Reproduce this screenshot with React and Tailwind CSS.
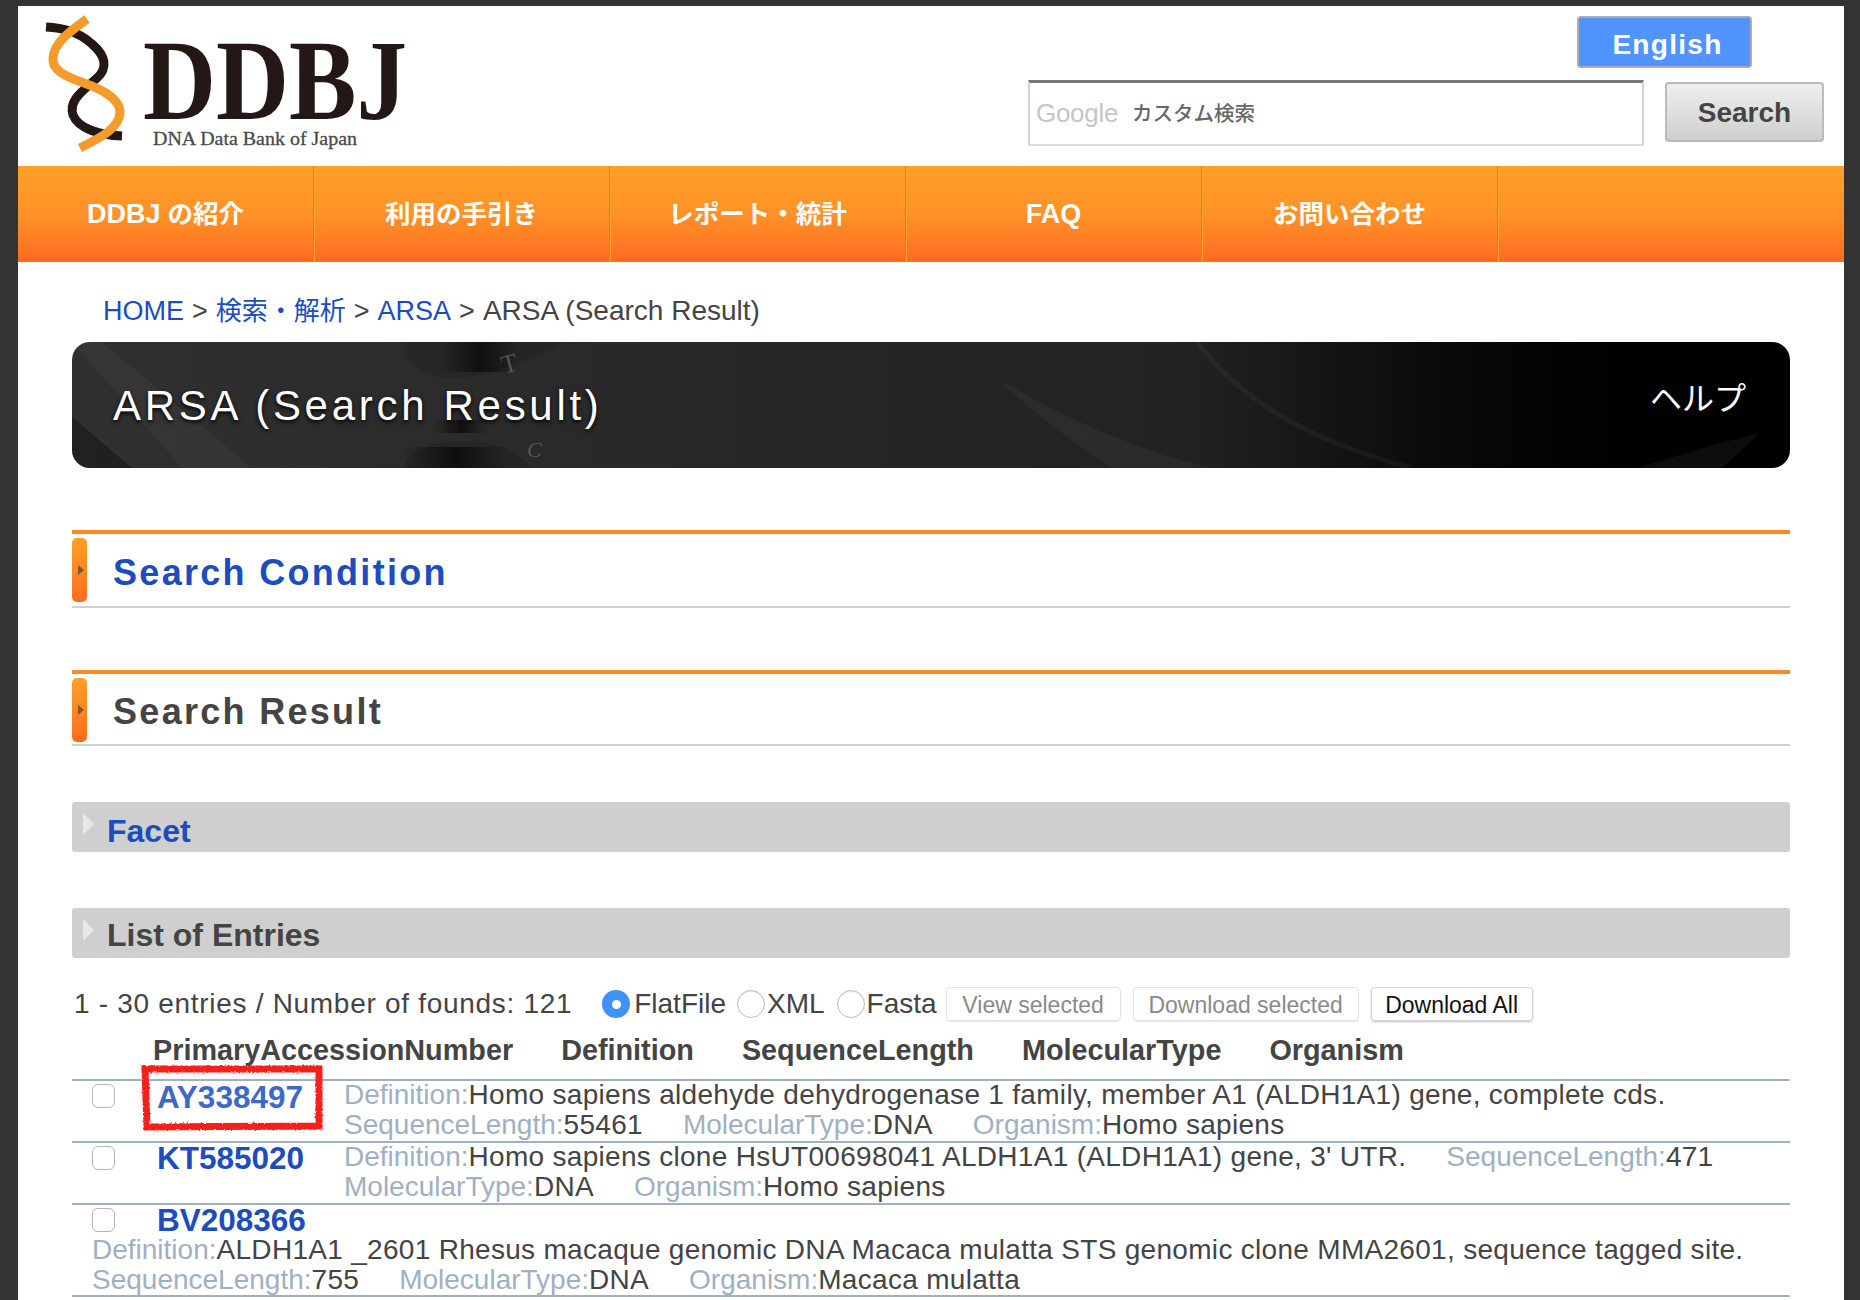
const navItems = [
  { latin: 'DDBJ', text: ' の紹介' },
  { text: '利用の手引き' },
  { text: 'レポート・統計' },
  { latin: 'FAQ' },
  { text: 'お問い合わせ' },
];

const Logo = () => (
  <svg width="400" height="160" viewBox="18 6 400 160" className="shrink-0">
    <path d="M46 27 C62 28 78 31 92 44 C106 56 108 68 97 78 C84 90 68 100 73 115 C78 128 98 135 122 136" fill="none" stroke="#231815" strokeWidth="9" />
    <path d="M87 19 C72 30 54 42 53 58 C52 70 64 76 84 83 C104 90 120 100 120 112 C120 128 100 138 80 148" fill="none" stroke="#f39c2c" strokeWidth="9" />
    <text x="143" y="119" textLength="264" lengthAdjust="spacingAndGlyphs" fontFamily="Liberation Serif" fontWeight="700" fontSize="114" fill="#231815">DDBJ</text>
    <text x="153" y="145" textLength="204" lengthAdjust="spacingAndGlyphs" fontFamily="Liberation Serif" fontSize="19" fill="#4a4a4a" stroke="#4a4a4a" strokeWidth="0.3">DNA Data Bank of Japan</text>
  </svg>
);

const BannerArt = () => (
  <svg className="absolute inset-0 h-full w-full" viewBox="0 0 1718 126" preserveAspectRatio="none">
    <defs>
      <linearGradient id="band" x1="0" x2="1" y1="0" y2="0">
        <stop offset="0" stopColor="#111" stopOpacity="0" />
        <stop offset="0.5" stopColor="#0c0c0c" stopOpacity="0.9" />
        <stop offset="1" stopColor="#111" stopOpacity="0" />
      </linearGradient>
    </defs>
    <path d="M0 0 L30 0 L180 126 L110 126 Z" fill="#fff" opacity="0.03" />
    <path d="M0 75 L60 126 L0 126 Z" fill="#000" opacity="0.3" />
    <path d="M332 0 C330 20 360 50 420 30 C450 20 480 10 490 0 Z" fill="#000" opacity="0.1" />
    <path d="M332 126 C335 105 380 90 430 105 C445 112 455 120 460 126 Z" fill="#000" opacity="0.12" />
    <rect x="368" y="0" width="80" height="30" fill="url(#band)" />
    <rect x="331" y="105" width="107" height="21" fill="url(#band)" />
    <rect x="361" y="78" width="57" height="13" fill="url(#band)" />
    <path d="M1125 0 C1170 60 1240 100 1340 126" fill="none" stroke="#fff" strokeWidth="5" opacity="0.04" />
    <path d="M928 38 C1000 80 1060 105 1138 126 L1040 126 C1000 100 960 70 928 38 Z" fill="#fff" opacity="0.04" />
    <path d="M1565 126 C1610 112 1650 100 1688 91 L1650 126 Z" fill="#fff" opacity="0.05" />
    <text x="432" y="32" fontFamily="Liberation Serif" fontSize="26" fill="#777" opacity="0.6" transform="rotate(-15 432 32)">T</text>
    <text x="455" y="115" fontFamily="Liberation Serif" fontStyle="italic" fontSize="22" fill="#777" opacity="0.6">C</text>
  </svg>
);

const SectionHead = ({ title, titleClass, after }) => (
  <div className={`border-t-4 border-b-2 border-t-[#fb8a24] border-b-[#d0d0d0] pt-1 ${after}`}>
    <div className="flex h-16 items-center">
      <div className="flex h-16 w-[15px] items-center rounded-[5px] bg-gradient-to-b from-[#ff9f28] to-[#fe6b20] pl-[6px]">
        <div className="h-0 w-0 border-y-[5px] border-l-[6px] border-y-transparent border-l-[#7a5a30]" />
      </div>
      <h2 className={`ml-[26px] text-[36px] font-bold tracking-[2.3px] ${titleClass}`}>{title}</h2>
    </div>
  </div>
);

const FoldBar = ({ title, color, after }) => (
  <div className={`flex h-[50px] items-center rounded-[3px] bg-[#cfcfcf] pl-[11px] ${after}`}>
    <div className="mb-[6px] h-0 w-0 border-y-[11px] border-l-[11px] border-y-transparent border-l-[#e8e8e8]" />
    <h3 className={`ml-[13px] text-[32px] font-bold ${color}`}>{title}</h3>
  </div>
);

const Radio = ({ checked }) =>
  checked ? (
    <span className="flex h-[28px] w-[28px] items-center justify-center rounded-full bg-[#3f93f7]">
      <span className="h-[9px] w-[9px] rounded-full bg-white" />
    </span>
  ) : (
    <span className="h-[28px] w-[28px] rounded-full border border-[#bdbdbd] bg-white shadow-[inset_0_1px_1px_rgba(0,0,0,0.1)]" />
  );

const Field = ({ label, value }) => (
  <span>
    <span className="tracking-normal text-[#9fb0c2]">{label}:</span>
    {value}
  </span>
);

const Checkbox = () => <span className="block h-6 w-[23px] shrink-0 rounded-[6px] border border-[#b5b5b5] bg-white" />;

// the freehand red box around the first accession number
const RedMark = () => (
  <svg className="absolute left-[-18px] top-[-18px]" width="190" height="72" viewBox="0 0 190 72">
    <defs>
      <filter id="rough" colorInterpolationFilters="sRGB">
        <feTurbulence type="fractalNoise" baseFrequency="0.5" numOctaves="2" seed="3" />
        <feDisplacementMap in="SourceGraphic" scale="3" xChannelSelector="R" yChannelSelector="G" />
      </filter>
    </defs>
    <path d="M6 6 L180 6 L180 63 L8 64 Z" fill="none" stroke="#f4201c" strokeWidth="7" filter="url(#rough)" />
  </svg>
);

export default function App() {
  return (
    <div className="h-[1300px] overflow-hidden bg-[#333333] pl-[18px] pr-4 pt-[6px] font-['Liberation_Sans','Noto_Sans_CJK_JP',sans-serif] text-[#444444]">
      <div className="h-full bg-white">
        {/* header */}
        <div className="flex h-40 justify-between">
          <Logo />
          <div className="flex flex-col items-end pr-5 pt-[10px]">
            <button className="mr-[72px] h-[52px] w-[175px] rounded-[4px] border-2 border-[#a8adb5] bg-[#5294ff] pl-[6px] pt-[6px] text-[28px] font-bold tracking-[1.3px] text-white">English</button>
            <div className="mt-3 flex items-center gap-[21px]">
              <div className="flex h-[66px] w-[616px] items-center border-x-2 border-b-2 border-t-[3px] border-x-[#d4d4d4] border-b-[#dddddd] border-t-[#777777] pl-[6px]">
                <span className="text-[26px] tracking-[-0.3px] text-[#c6c6c6]">Google</span>
                <span className="ml-[14px] pt-[2px] text-[20.5px] font-medium text-[#666666]">カスタム検索</span>
              </div>
              <button className="mb-[2px] h-[60px] w-[159px] rounded-[4px] border-2 border-[#bbbbbb] bg-gradient-to-b from-[#efefef] to-[#cfcfcf] pt-[2px] text-[28px] font-bold text-[#444444]">Search</button>
            </div>
          </div>
        </div>

        {/* nav */}
        <div className="flex h-24 bg-gradient-to-b from-[#ff9f28] via-[#ff9229] to-[#fe6a20]">
          {navItems.map((item) => (
            <a key={item.latin || item.text} className="flex w-[296px] items-center justify-center whitespace-pre border-r border-r-[#f9701f] text-[25.5px] font-bold text-white shadow-[1px_0_0_#ffa628]">
              {item.latin && <span className="text-[27px]">{item.latin}</span>}
              {item.text}
            </a>
          ))}
        </div>

        <div className="px-[54px]">
          {/* breadcrumb */}
          <div className="flex h-20 items-center gap-2 pl-[31px] pt-[18px] text-[27px]">
            <a className="text-[#1c4cc0]">HOME</a>
            <span>&gt;</span>
            <a className="text-[26px] text-[#1c4cc0]">検索・解析</a>
            <span>&gt;</span>
            <a className="text-[#1c4cc0]">ARSA</a>
            <span>&gt;</span>
            <span className="-mt-[1px] text-[28px]">ARSA (Search Result)</span>
          </div>

          {/* title banner */}
          <div className="relative mb-[62px] flex h-[126px] items-center justify-between overflow-hidden rounded-[18px] bg-gradient-to-r from-[#303030] via-[#222222] via-65% to-[#000000] pl-[41px] pr-[44px]">
            <BannerArt />
            <h1 className="relative text-[42px] tracking-[3.7px] text-white [text-shadow:0_2px_4px_#000]">ARSA (Search Result)</h1>
            <a className="relative mb-3 text-[32px] text-white">ヘルプ</a>
          </div>

          <SectionHead title="Search Condition" titleClass="pt-[5px] text-[#1c4cc0]" after="mb-[62px] pb-1" />
          <SectionHead title="Search Result" titleClass="pt-[3px] text-[#444444]" after="mb-14 pb-[2px]" />
          <FoldBar title="Facet" color="pt-2 text-[#1c4cc0]" after="mb-14" />
          <FoldBar title="List of Entries" color="pt-[3px] text-[#444444]" after="mb-7" />

          {/* controls */}
          <div className="flex h-[34px] items-center pt-[2px] text-[28px]">
            <span className="ml-[2px] tracking-[0.7px]">1 - 30 entries / Number of founds: 121</span>
            <span className="ml-[30px] flex items-center gap-[4px]"><Radio checked />FlatFile</span>
            <span className="ml-[11px] flex items-center gap-[2px]"><Radio />XML</span>
            <span className="ml-[12px] flex items-center gap-[2px]"><Radio />Fasta</span>
            <div className="ml-[9px] flex gap-3 text-[23px]">
              <button className="h-[34px] w-[175px] rounded-[4px] border border-[#e3e3e3] text-[#8a8a8a] shadow-[0_1px_1px_rgba(0,0,0,0.1)]">View selected</button>
              <button className="h-[34px] w-[226px] rounded-[4px] border border-[#e3e3e3] text-[#8a8a8a] shadow-[0_1px_1px_rgba(0,0,0,0.1)]">Download selected</button>
              <button className="h-[34px] w-[162px] rounded-[4px] border border-[#d5d5d5] text-[#111111] shadow-[0_1px_2px_rgba(0,0,0,0.25)]">Download All</button>
            </div>
          </div>

          {/* entries header */}
          <div className="flex h-[59px] items-center gap-12 pl-[81px] pt-[3px] text-[28.8px] font-bold">
            <span>PrimaryAccessionNumber</span>
            <span>Definition</span>
            <span>SequenceLength</span>
            <span>MolecularType</span>
            <span>Organism</span>
          </div>

          {/* entries */}
          <div className="text-[28px] leading-[30px]">
            <div className="flex h-[62px] border-t-2 border-[#9fb0bf] pl-5">
              <div className="mt-[3px]"><Checkbox /></div>
              <div className="relative ml-[42px] w-[187px] shrink-0 pt-[1px] text-[31.5px] font-bold text-[#3f68c8]">
                AY338497
                <RedMark />
              </div>
              <div className="-mt-[1px] tracking-[0.3px]">
                <div><Field label="Definition" value="Homo sapiens aldehyde dehydrogenase 1 family, member A1 (ALDH1A1) gene, complete cds." /></div>
                <div className="flex gap-10">
                  <Field label="SequenceLength" value="55461" />
                  <Field label="MolecularType" value="DNA" />
                  <Field label="Organism" value="Homo sapiens" />
                </div>
              </div>
            </div>

            <div className="flex h-[62px] border-t-2 border-[#9fb0bf] pl-5">
              <div className="mt-[3px]"><Checkbox /></div>
              <div className="ml-[42px] w-[187px] shrink-0 text-[31.5px] font-bold text-[#1c4cc0]">KT585020</div>
              <div className="-mt-[1px] tracking-[0.3px]">
                <div className="flex gap-10">
                  <Field label="Definition" value="Homo sapiens clone HsUT00698041 ALDH1A1 (ALDH1A1) gene, 3' UTR." />
                  <Field label="SequenceLength" value="471" />
                </div>
                <div className="flex gap-10">
                  <Field label="MolecularType" value="DNA" />
                  <Field label="Organism" value="Homo sapiens" />
                </div>
              </div>
            </div>

            <div className="h-[94px] border-y-2 border-[#9fb0bf] pl-5">
              <div className="flex">
                <div className="mt-[3px]"><Checkbox /></div>
                <div className="ml-[42px] text-[31.5px] font-bold text-[#1c4cc0]">BV208366</div>
              </div>
              <div className="tracking-[0.3px]">
                <div><Field label="Definition" value="ALDH1A1 _2601 Rhesus macaque genomic DNA Macaca mulatta STS genomic clone MMA2601, sequence tagged site." /></div>
                <div className="flex gap-10">
                  <Field label="SequenceLength" value="755" />
                  <Field label="MolecularType" value="DNA" />
                  <Field label="Organism" value="Macaca mulatta" />
                </div>
              </div>
            </div>
          </div>
        </div>
      </div>
    </div>
  );
}
